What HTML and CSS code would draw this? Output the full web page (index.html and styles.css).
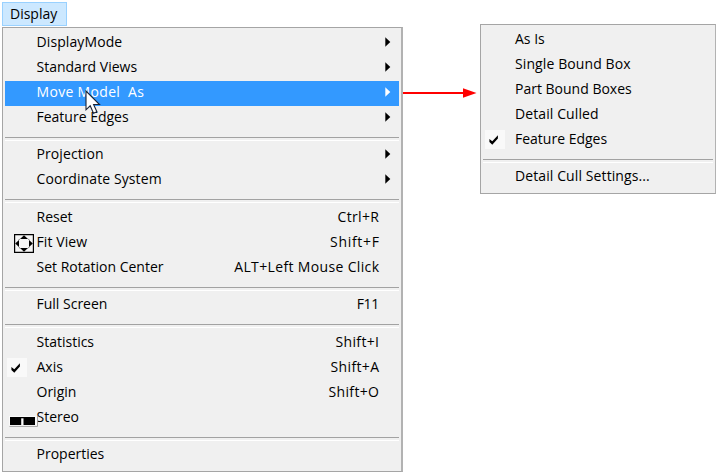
FILE: index.html
```
<!DOCTYPE html>
<html lang="en">
<head>
<meta charset="utf-8">
<title>Display menu</title>
<link rel="stylesheet" href="styles.css">
</head>
<body>
<svg class="defs" width="0" height="0">
  <defs>
    <symbol id="arrow" viewBox="0 0 6 10"><path d="M.3 .3 5.3 5 .3 9.7z" fill="currentColor"/></symbol>
    <symbol id="check" viewBox="0 0 20 19"><path fill="#f9f9f9" d="M0 0h20v19H0z"/><path d="M4.400 8.900v3l2.900 2.800 5.600-6.200V5.300L7.300 11.200z" fill="#000"/></symbol>
  </defs>
</svg>
<div class="screen">
  <div class="main">
    <div class="title">Display</div>
    <div class="menu">
      <div class="item"><span class="label loose">DisplayMode</span><svg class="arrow"><use href="#arrow"/></svg></div>
      <div class="item"><span class="label">Standard Views</span><svg class="arrow"><use href="#arrow"/></svg></div>
      <div class="item active"><span class="label looser">Move Model&nbsp; As</span><svg class="arrow"><use href="#arrow"/></svg>
        <svg class="cursor" viewBox="0 0 16 25"><path d="M1 1v18.8l4.2-4 3.3 7.4 3.4-1.5-3.3-7.2h5.9z" fill="#fff" stroke="#1c2434" stroke-width="1.1"/></svg>
      </div>
      <div class="item"><span class="label">Feature Edges</span><svg class="arrow"><use href="#arrow"/></svg></div>
      <div class="sep"></div>
      <div class="item"><span class="label loose">Projection</span><svg class="arrow"><use href="#arrow"/></svg></div>
      <div class="item"><span class="label loose">Coordinate System</span><svg class="arrow"><use href="#arrow"/></svg></div>
      <div class="sep"></div>
      <div class="item"><span class="label">Reset</span><span class="key">Ctrl+R</span></div>
      <div class="item">
        <svg class="fit" viewBox="0 0 20 19"><path d="M.6 .6h18.8v17.8H.6z" fill="#f6f6f6" stroke="#000" stroke-width="1.2"/><path d="M10 1.3 14 5H6zM10 17.7 6 14h8zM1.2 9.5 5 6v7zM18.8 9.5 15 13V6z"/><path d="M6 4.7 4.7 6M14 4.7 15.3 6M6 14.3 4.7 13M14 14.3 15.3 13" stroke="#555" stroke-width=".8"/></svg>
        <span class="label loose">Fit View</span><span class="key wide">Shift+F</span>
      </div>
      <div class="item"><span class="label">Set Rotation Center</span><span class="key">ALT+Left Mouse Click</span></div>
      <div class="sep"></div>
      <div class="item"><span class="label">Full Screen</span><span class="key short">F11</span></div>
      <div class="sep"></div>
      <div class="item"><span class="label">Statistics</span><span class="key">Shift+I</span></div>
      <div class="item"><svg class="check"><use href="#check"/></svg><span class="label">Axis</span><span class="key">Shift+A</span></div>
      <div class="item"><span class="label">Origin</span><span class="key">Shift+O</span></div>
      <div class="item">
        <svg class="stereo" viewBox="0 0 29 11"><path fill="#fafafa" d="M0 0h28v10H0z"/><path d="M.5 10.4h28V0" fill="none" stroke="#999" stroke-width=".9"/><path d="M1 1h11.2v8H1zM14.5 1H26v8H14.500z"/><path d="M12 1h3v1.300h-3z"/></svg>
        <span class="label">Stereo</span>
      </div>
      <div class="sep"></div>
      <div class="item"><span class="label">Properties</span></div>
    </div>
  </div>
  <svg class="pointer" viewBox="0 0 74 12"><path d="M0 6h62" stroke="#f00" stroke-width="1.800"/><path d="M60 1.300 73.500 6 60 10.700z" fill="#f00"/></svg>
  <div class="menu sub">
    <div class="item"><span class="label">As Is</span></div>
    <div class="item"><span class="label loose">Single Bound Box</span></div>
    <div class="item"><span class="label">Part Bound Boxes</span></div>
    <div class="item"><span class="label loose">Detail Culled</span></div>
    <div class="item"><svg class="check"><use href="#check"/></svg><span class="label">Feature Edges</span></div>
    <div class="sep"></div>
    <div class="item"><span class="label loose">Detail Cull Settings...</span></div>
  </div>
</div>
</body>
</html>
```
FILE: styles.css
```
* { box-sizing: border-box; }

body {
  margin: 0;
  background: #fff;
  color: #000;
  font: 14px/22px "Open Sans", "Noto Sans", sans-serif;
  letter-spacing: 0;
}

svg { display: block; }
.defs { position: absolute; }

.screen {
  display: flex;
  align-items: flex-start;
  width: 720px;
  height: 476px;
  padding: 2px 0 0 2px;
  overflow: hidden;
}

.main { width: 401px; }

.title {
  width: 65px;
  height: 24px;
  padding-left: 7px;
  border: 1px solid #99d1ff;
  background: #cce8ff;
}

.menu {
  width: 401px;
  height: 445px;
  margin-top: 1px;
  padding: 2.500px 2px 0;
  border: 1px solid #a5a5a5;
  border-right: 2px solid #b2b2b2;
  background: #f0f0f0;
}

.item {
  position: relative;
  display: flex;
  justify-content: space-between;
  height: 25px;
  padding: 0 20px 0 31.5px;
  line-height: 22px;
  white-space: nowrap;
}

.loose { letter-spacing: 0.1px; }
.looser { letter-spacing: 0.32px; }
.key { letter-spacing: 0.35px; margin-right: -0.35px; }
.wide { letter-spacing: 0.7px; margin-right: -0.7px; }
.short { letter-spacing: -0.3px; margin-right: 0; }

.active { background: #3399ff; color: #fff; }

.arrow {
  width: 6px;
  height: 10px;
  margin: 6px -12px 0 0;
  color: #000;
}
.active .arrow { color: #fff; }

.sep { height: 12.500px; padding-top: 6px; }
.sep::before {
  content: "";
  display: block;
  height: 2px;
  border-top: 1px solid #a2a2a2;
  border-bottom: 1px solid #fff;
}

.cursor {
  position: absolute;
  z-index: 1;
  left: 80px;
  top: 9.500px;
  width: 16px;
  height: 25px;
}

.check, .fit, .stereo { position: absolute; }
.check { left: 2px; top: 2.500px; width: 20px; height: 19px; }
.fit { left: 9px; top: 3.500px; width: 20px; height: 19px; }
.stereo { left: 4px; top: 10.500px; width: 29px; height: 11px; }

.pointer { width: 74px; height: 12px; margin-top: 84.500px; }

.sub {
  width: 236px;
  height: 170px;
  margin: 22px 0 0 3px;
  border-right-width: 1px;
}
.sub .item { padding-left: 32px; }
```
